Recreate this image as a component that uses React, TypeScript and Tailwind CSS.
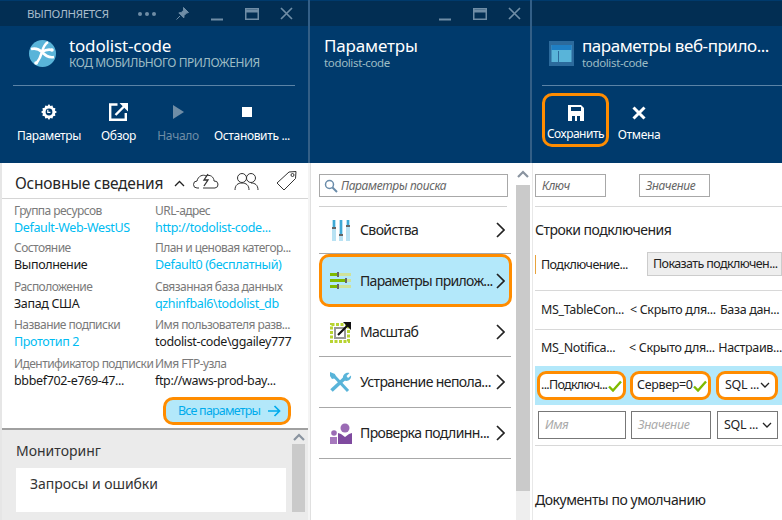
import React from "react";

const Chevron = () => (
  <svg width="9" height="16" viewBox="0 0 9 16" className="shrink-0"><path d="M1 1 L8 8 L1 15" fill="none" stroke="#222" strokeWidth="1.7" /></svg>
);

const WinControls = ({ pr }: { pr: string }) => (
  <div className={`flex items-center gap-[21px] text-[#6f8da6] ${pr}`}>
    <svg width="13" height="14" viewBox="0 0 13 14"><path d="M0 12.5h12" stroke="currentColor" strokeWidth="2" /></svg>
    <svg width="14" height="12" viewBox="0 0 14 12"><rect x="0.75" y="0.75" width="12.5" height="10.5" fill="none" stroke="currentColor" strokeWidth="1.5" /><path d="M0 3h14" stroke="currentColor" strokeWidth="3" /></svg>
    <svg width="13" height="13" viewBox="0 0 13 13"><path d="M1 1l11 11M12 1L1 12" stroke="currentColor" strokeWidth="1.7" /></svg>
  </div>
);

const Cmd = ({ icon, label, w, dim }: { icon: React.ReactNode; label: string; w: string; dim?: boolean }) => (
  <div className={`flex flex-col items-center ${w}`}>
    <div className="h-[24px] flex items-center justify-center">{icon}</div>
    <div className={`mt-[4px] text-[12px] leading-[16px] whitespace-nowrap ${dim ? "text-[#6f8da6]" : "text-white"}`}>{label}</div>
  </div>
);

const Field = ({ label, value, link, h }: { label: string; value: string; link?: boolean; h: string }) => (
  <div className={h}>
    <div className="text-[12px] leading-[16px] tracking-[-0.55px] text-[#7a7a7a] whitespace-nowrap">{label}</div>
    <div className={`text-[12.5px] leading-[17px] whitespace-nowrap ${link ? "text-[#00bcf2]" : "text-[#1a1a1a]"}`}>{value}</div>
  </div>
);

const MenuItem = ({ icon, label, h }: { icon: React.ReactNode; label: string; h: string }) => (
  <div className={`${h} w-[192px] flex items-center pl-[10px] pr-[6px] border-b border-[#a8a8a8]`}>
    <div className="w-[23px] h-[24px] flex items-center justify-center shrink-0">{icon}</div>
    <div className="ml-[8px] flex-1 text-[14px] leading-[20px] tracking-[-0.6px] text-[#222] whitespace-nowrap">{label}</div>
    <Chevron />
  </div>
);

const Check = () => (
  <svg width="14" height="12" viewBox="0 0 14 12" className="shrink-0"><path d="M1 6.5l4 4L13 1.5" fill="none" stroke="#7fba00" strokeWidth="2.4" /></svg>
);
const Down = () => (
  <svg width="10" height="7" viewBox="0 0 10 7" className="shrink-0"><path d="M1 1l4 4 4-4" fill="none" stroke="#222" strokeWidth="1.3" /></svg>
);
const ArrowUp = () => (
  <svg width="12" height="8" viewBox="0 0 12 8"><path d="M1 7l5-5 5 5" fill="none" stroke="#8a94a0" strokeWidth="2.2" /></svg>
);

export default function App() {
  return (
    <div className="w-[782px] h-[520px] overflow-hidden flex bg-[#f4f4f4] text-[#222]" style={{ fontFamily: '"Noto Sans", "Open Sans", sans-serif', letterSpacing: "-0.35px" }}>
      {/* Blade 1 */}
      <div className="w-[308px] shrink-0 flex flex-col">
        <div className="h-[163px] w-[308px] shrink-0 bg-[#003a6c] flex flex-col">
          <div className="h-[25px] mt-[1px] bg-[#022e53] flex items-center justify-between pl-[27px]">
            <div className="text-[11.5px] text-[#a9bccb]">ВЫПОЛНЯЕТСЯ</div>
            <div className="flex items-center">
              <div className="flex gap-[3px] mr-[20px]"><span className="w-[4px] h-[4px] rounded-full bg-[#6f8da6]" /><span className="w-[4px] h-[4px] rounded-full bg-[#6f8da6]" /><span className="w-[4px] h-[4px] rounded-full bg-[#6f8da6]" /></div>
              <svg width="13" height="13" viewBox="0 0 13 13" className="mr-[22px]"><path d="M7.5 0.5l5 5-2 .6-2.4 2.4-.3 2.4-5-5 2.4-.3 2.4-2.4z M4 9l-3.5 3.5" fill="#6f8da6" stroke="#6f8da6" /></svg>
              <WinControls pr="pr-[15px]" />
            </div>
          </div>
          <div className="h-[60px] flex items-center mx-[13px] pl-[16px] border-b border-[#5b83a6]">
            <svg width="27" height="27" viewBox="0 0 27 27" className="shrink-0 -mt-[4px]">
              <circle cx="13.5" cy="13.5" r="13.5" fill="#59b4d9" />
              <path d="M2 9c4-1 8 0 11 3s6 6 12 5M19 2c-3 2-5 6-6 10s-3 8-6 12M13 12c3-2 6-3 10-2" fill="none" stroke="#fff" strokeWidth="2.6" />
              <circle cx="23" cy="10" r="1.8" fill="#fff" />
              <circle cx="7" cy="23" r="1.8" fill="#fff" />
            </svg>
            <div className="ml-[13px] -mt-[5px]">
              <div className="text-[17px] tracking-[-0.15px] leading-[20px] text-white">todolist-code</div>
              <div className="text-[12px] tracking-[-0.45px] leading-[14px] text-[#9dbcc4]">КОД МОБИЛЬНОГО ПРИЛОЖЕНИЯ</div>
            </div>
          </div>
          <div className="flex pl-[11px] pt-[14px]">
            <Cmd w="w-[76px]" label="Параметры" icon={<svg width="16" height="16" viewBox="0 0 16 16"><path d="M8 0l1.3 1.9 2.2-.5.6 2.3 2.3.6-.5 2.2L16 8l-2.1 1.5.5 2.2-2.3.6-.6 2.3-2.2-.5L8 16l-1.5-1.9-2.2.5-.6-2.3-2.3-.6.5-2.2L0 8l1.9-1.5-.5-2.2 2.3-.6.6-2.3 2.2.5z" fill="#fff" /><circle cx="8" cy="8" r="3.4" fill="#003a6c" /><path d="M6.8 5.8v2.6h2.6" fill="none" stroke="#fff" strokeWidth="1.2" /></svg>} />
            <Cmd w="w-[63px]" label="Обзор" icon={<svg width="19" height="18" viewBox="0 0 19 18"><path d="M8.5 1.5H1.2v15.3h15.6V10" fill="none" stroke="#fff" strokeWidth="2.4" /><path d="M6.5 12L15 3.5" stroke="#fff" strokeWidth="2.4" /><path d="M10.5 0H19v8.5z" fill="#fff" /></svg>} />
            <Cmd w="w-[56px]" dim label="Начало" icon={<svg width="11" height="14" viewBox="0 0 11 14"><path d="M0 0l11 7L0 14z" fill="#6f8da6" /></svg>} />
            <Cmd w="w-[92px]" label="Остановить ..." icon={<div className="w-[10px] h-[10px] bg-white mr-[11px]" />} />
          </div>
        </div>
        <div className="flex-1 bg-white flex flex-col border-l-2 border-[#e6e6e6] min-h-0">
          <div className="h-[36px] shrink-0 border-b border-[#d5d5d5] flex items-center pl-[13px] pt-[6px]">
            <div className="text-[15.5px] tracking-[-0.2px] text-[#262626] w-[159px] whitespace-nowrap">Основные сведения</div>
            <svg width="11" height="7" viewBox="0 0 11 7" className="mr-[8px]"><path d="M1 6l4.5-4.5L10 6" fill="none" stroke="#222" strokeWidth="1.3" /></svg>
            <svg width="27" height="20" viewBox="0 0 27 20" className="-mt-[5px]"><path d="M6 17H4a3.5 3.5 0 0 1 0-7c1-5 6-7 9-5 4-2 8 1 8 5a3.5 3.5 0 0 1 1 7H10" fill="none" stroke="#333" strokeWidth="1" /><path d="M15 3l-4 6h4l-4 6" fill="none" stroke="#333" strokeWidth="1.3" /></svg>
            <svg width="25" height="19" viewBox="0 0 25 19" className="ml-[14px] -mt-[5px]"><circle cx="8" cy="6" r="4.5" fill="none" stroke="#333" /><circle cx="17" cy="6" r="4.5" fill="none" stroke="#333" /><path d="M1 18c0-5 3-7 7-7s7 2 7 7M17 11c4 0 7 2 7 7" fill="none" stroke="#333" /></svg>
            <svg width="22" height="22" viewBox="0 0 22 22" className="ml-[17px] -mt-[5px]"><path d="M1 13L13 2l7-.5-.5 7L8 20z" fill="none" stroke="#333" /><circle cx="16.5" cy="5" r="1.5" fill="none" stroke="#333" /></svg>
          </div>
          <div className="flex pl-[12px] pt-[4px] h-[198px] shrink-0">
            <div className="w-[141px] shrink-0">
              <Field h="h-[37px]" label="Группа ресурсов" value="Default-Web-WestUS" link />
              <Field h="h-[39px]" label="Состояние" value="Выполнение" />
              <Field h="h-[38px]" label="Расположение" value="Запад США" />
              <Field h="h-[39px]" label="Название подписки" value="Прототип 2" link />
              <Field h="h-[38px]" label="Идентификатор подписки" value="bbbef702-e769-47..." />
            </div>
            <div className="whitespace-nowrap">
              <Field h="h-[37px]" label="URL-адрес" value="http://todolist-code..." link />
              <Field h="h-[39px]" label="План и ценовая категор..." value="Default0 (бесплатный)" link />
              <Field h="h-[38px]" label="Связанная база данных" value="qzhinfbal6\todolist_db" link />
              <Field h="h-[39px]" label="Имя пользователя разв..." value="todolist-code\ggailey777" />
              <Field h="h-[38px]" label="Имя FTP-узла" value="ftp://waws-prod-bay..." />
            </div>
          </div>
          <div className="h-[31px] shrink-0 flex items-start pl-[161px]">
            <div className="w-[128px] h-[28px] bg-[#b3e8fa] border-[3px] border-[#ff8c00] rounded-[10px] flex items-center justify-between pl-[12px] pr-[7px] text-[12.5px] tracking-[-0.8px] text-[#00abec] whitespace-nowrap">
              <span>Все параметры</span>
              <svg width="13" height="12" viewBox="0 0 13 12"><path d="M0 6h11M6.5 1l5 5-5 5" fill="none" stroke="#00abec" strokeWidth="1.7" /></svg>
            </div>
          </div>
          <div className="flex-1 bg-[#ebebeb] border-t-2 border-[#a0a0a0] flex min-h-0">
            <div className="flex-1 pl-[14px] pt-[11px] min-w-0">
              <div className="text-[14px] leading-[20px] tracking-[0px] text-[#333]">Мониторинг</div>
              <div className="mt-[7px] w-[270px] h-[44px] bg-white pl-[14px] pt-[6px] text-[14px] leading-[20px] tracking-[-0.05px] text-[#333]">Запросы и ошибки</div>
            </div>
            <div className="w-[13px] mr-[3px] flex flex-col shrink-0">
              <div className="h-[14px] flex items-center justify-center"><ArrowUp /></div>
              <div className="h-[68px] bg-[#cacaca]" />
            </div>
          </div>
        </div>
      </div>
      <div className="w-[2px] shrink-0 bg-[#335f87] h-[163px]" />
      {/* Blade 2 */}
      <div className="w-[222px] shrink-0 flex flex-col">
        <div className="h-[163px] shrink-0 bg-[#003a6c] flex flex-col">
          <div className="h-[25px] mt-[1px] bg-[#022e53] flex items-center justify-end"><WinControls pr="pr-[11px]" /></div>
          <div className="pl-[14px] pt-[10px]">
            <div className="text-[17px] leading-[20px] tracking-[-0.15px] text-white">Параметры</div>
            <div className="text-[11.5px] leading-[14px] text-[#9dbcc4]">todolist-code</div>
          </div>
        </div>
        <div className="flex-1 bg-white flex min-h-0 border-l border-[#e0e0e0]">
          <div className="w-[205px] pl-[8px] shrink-0">
            <div className="mt-[11px] w-[189px] h-[23px] border border-[#a8a8a8] flex items-center pl-[4px]">
              <svg width="14" height="14" viewBox="0 0 14 14"><circle cx="5.5" cy="5.5" r="4" fill="none" stroke="#6a8caa" strokeWidth="1.5" /><path d="M8.5 8.5l4.5 4.5" stroke="#6a8caa" strokeWidth="2" /></svg>
              <span className="ml-[3px] text-[12px] italic text-[#666] whitespace-nowrap">Параметры поиска</span>
            </div>
            <div className="mt-[9px] w-[188px] border-t border-[#d0d0d0]" />
            <MenuItem h="h-[47px]" label="Свойства" icon={<svg width="18" height="21" viewBox="0 0 18 21"><rect x="0" y="0" width="4" height="21" fill="#b9e2f3" /><rect x="7" y="0" width="4" height="21" fill="#b9e2f3" /><rect x="14" y="0" width="4" height="21" fill="#b9e2f3" /><rect x="1" y="0" width="2" height="8" fill="#3fa9d5" /><rect x="8" y="0" width="2" height="14" fill="#3fa9d5" /><rect x="15" y="0" width="2" height="6" fill="#3fa9d5" /><rect x="0" y="7" width="4" height="2" fill="#666" /><rect x="7" y="14" width="4" height="2" fill="#666" /><rect x="14" y="5" width="4" height="2" fill="#666" /></svg>} />
            <div className="h-[53px] w-[193px] bg-[#b3e8fa] border-[3px] border-[#ff8c00] rounded-[10px] flex items-center pl-[7px] pr-[4px]">
              <div className="w-[23px] h-[24px] flex items-center justify-center shrink-0"><svg width="21" height="17" viewBox="0 0 21 17"><rect x="0" y="1" width="21" height="3" fill="#cfe29a" /><rect x="0" y="7" width="21" height="3" fill="#cfe29a" /><rect x="0" y="13" width="21" height="3" fill="#cfe29a" /><rect x="0" y="1" width="8" height="3" fill="#7fba00" /><rect x="0" y="7" width="15" height="3" fill="#7fba00" /><rect x="0" y="13" width="7" height="3" fill="#7fba00" /><rect x="7" y="0" width="2" height="5" fill="#666" /><rect x="15" y="6" width="2" height="5" fill="#666" /><rect x="7" y="12" width="2" height="5" fill="#666" /></svg></div>
              <div className="ml-[8px] flex-1 min-w-0 text-[14px] leading-[20px] tracking-[-0.7px] text-[#222] whitespace-nowrap">Параметры прилож...</div>
              <Chevron />
            </div>
            <MenuItem h="h-[50px]" label="Масштаб" icon={<svg width="22" height="22" viewBox="0 0 22 22"><rect x="1.5" y="3.5" width="17" height="17" fill="none" stroke="#b8d432" strokeWidth="3" strokeDasharray="3 1.5" /><rect x="5" y="7" width="10" height="10" fill="none" stroke="#999" strokeWidth="2" /><path d="M8 14L19 3" stroke="#111" strokeWidth="2.2" /><path d="M13 1h8v8z" fill="#111" /></svg>} />
            <MenuItem h="h-[51px]" label="Устранение непола..." icon={<svg width="23" height="21" viewBox="0 0 23 21"><path d="M5 4l14 15" stroke="#59b4d9" strokeWidth="3" /><path d="M1 0l5 2 1 4-4 1-2-3z" fill="#59b4d9" /><path d="M2.5 18.5L15.5 6.5" stroke="#59b4d9" strokeWidth="3.6" /><path d="M14 6.5C13.5 3 16.5 0 20.5 1l-3 3 1.5 2 3-2.5C22.8 7 19 10 15.5 8.5z" fill="#59b4d9" /></svg>} />
            <MenuItem h="h-[51px]" label="Проверка подлинн..." icon={<svg width="22" height="21" viewBox="0 0 22 21"><circle cx="15" cy="5" r="4.5" fill="#9b6bb5" /><circle cx="4" cy="10" r="2.8" fill="#9b6bb5" /><path d="M8 10l3 1 4 3 4-3 3-1v11H8z" fill="#7f4a9f" /><path d="M0 14h7v7H0z" fill="#a678bd" /></svg>} />
          </div>
          <div className="w-[14px] flex flex-col shrink-0 bg-[#eeeeee]">
            <div className="h-[22px] bg-white flex items-center justify-center"><ArrowUp /></div>
            <div className="h-[306px] bg-[#cacaca]" />
          </div>
          <div className="flex-1 bg-white" />
        </div>
      </div>
      {/* Blade 3 */}
      <div className="flex-1 min-w-0 flex flex-col">
        <div className="h-[163px] shrink-0 bg-[#003a6c] flex flex-col border-l-2 border-[#335f87] -ml-[2px]">
          <div className="h-[25px] mt-[1px] bg-[#022e53]" />
          <div className="h-[60px] flex items-center ml-[10px] pl-[7px] border-b border-[#5b83a6]">
            <svg width="25" height="25" viewBox="0 0 25 25" className="shrink-0 -mt-[5px]"><rect width="25" height="25" fill="#2c6a9c" /><rect x="2.5" y="4" width="20" height="17" fill="#59b4d9" /><rect x="2.5" y="4" width="20" height="5" fill="#1f7fc4" /><rect x="9" y="10" width="1" height="11" fill="#2c6a9c" /></svg>
            <div className="ml-[8px] -mt-[5px] whitespace-nowrap">
              <div className="text-[17px] leading-[20px] tracking-[-0.45px] text-white">параметры веб-прило...</div>
              <div className="text-[11.5px] leading-[14px] text-[#9dbcc4]">todolist-code</div>
            </div>
          </div>
          <div className="flex pl-[10px] pt-[7px]">
            <div className="w-[67px] h-[54px] border-[3px] border-[#ff8c00] rounded-[10px] flex flex-col items-center pt-[9px]">
              <svg width="16" height="16" viewBox="0 0 16 16"><path d="M0 0h13l3 3v13H0z" fill="#fff" /><rect x="3" y="2" width="10" height="4" fill="#003a6c" /><rect x="4" y="11" width="3" height="5" fill="#003a6c" /><rect x="9" y="11" width="3" height="5" fill="#003a6c" /></svg>
              <div className="mt-[5px] text-[12px] leading-[16px] tracking-[-0.5px] text-white whitespace-nowrap">Сохранить</div>
            </div>
            <div className="w-[60px] flex flex-col items-center pt-[13px]">
              <svg width="14" height="14" viewBox="0 0 14 14"><path d="M1.5 1.5l11 11M12.5 1.5l-11 11" stroke="#fff" strokeWidth="3" /></svg>
              <div className="mt-[7px] text-[12px] leading-[16px] text-white whitespace-nowrap">Отмена</div>
            </div>
          </div>
        </div>
        <div className="flex-1 bg-white pl-[2px] flex flex-col min-h-0 border-l border-[#e8e8e8]">
          <div className="flex gap-[33px] mt-[11px] h-[23px] text-[12px] italic text-[#666]">
            <div className="w-[71px] border border-[#a8a8a8] pl-[6px] flex items-center">Ключ</div>
            <div className="w-[71px] border border-[#a8a8a8] pl-[6px] flex items-center">Значение</div>
          </div>
          <div className="mt-[9px] border-t border-[#d8d8d8]" />
          <div className="mt-[13px] text-[14px] leading-[20px] tracking-[-0.5px] text-[#222] whitespace-nowrap">Строки подключения</div>
          <div className="mt-[12px] h-[24px] flex items-center">
            <div className="w-[112px] h-[19px] border-l border-[#e8a33d] pl-[5px] text-[12.5px] leading-[19px] tracking-[-0.55px] whitespace-nowrap">Подключение...</div>
            <div className="flex-1 min-w-0 h-[24px] bg-[#eeeeee] border border-[#cccccc] pl-[5px] text-[12.5px] tracking-[-0.6px] leading-[21px] whitespace-nowrap overflow-hidden">Показать подключен...</div>
          </div>
          <div className="mt-[14px] border-t border-[#d8d8d8]" />
          <div className="h-[39px] flex items-center pl-[6px] border-b border-[#d8d8d8] text-[12.5px] text-[#222] whitespace-nowrap">
            <div className="w-[89px]">MS_TableCon...</div>
            <div className="w-[90px]">&lt; Скрыто для...</div>
            <div>База дан...</div>
          </div>
          <div className="h-[36px] flex items-center pl-[6px] text-[12.5px] text-[#222] whitespace-nowrap">
            <div className="w-[89px]">MS_Notifica...</div>
            <div className="w-[90px]">&lt; Скрыто для...</div>
            <div>Настраив...</div>
          </div>
          <div className="h-[39px] bg-[#b3e8fa] flex items-center pl-[2px] gap-[4px] text-[12.5px] text-[#222] whitespace-nowrap">
            <div className="w-[89px] h-[29px] bg-white border-[3px] border-[#ff8c00] rounded-[9px] flex items-center justify-between pl-[1px] pr-[1px]"><span className="tracking-[-0.7px]">...Подключ...</span><Check /></div>
            <div className="w-[81px] h-[29px] bg-white border-[3px] border-[#ff8c00] rounded-[9px] flex items-center justify-between pl-[4px] pr-[2px]"><span>Сервер=0</span><Check /></div>
            <div className="w-[62px] h-[29px] ml-[1px] bg-white border-[3px] border-[#ff8c00] rounded-[9px] flex items-center justify-between pl-[6px] pr-[5px]"><span>SQL ...</span><Down /></div>
          </div>
          <div className="mt-[6px] h-[28px] flex items-stretch pl-[3px] text-[12.5px] whitespace-nowrap">
            <div className="w-[88px] border border-[#777] pl-[6px] flex items-center italic text-[#aaa]">Имя</div>
            <div className="w-[80px] ml-[5px] border border-[#777] pl-[6px] flex items-center italic text-[#aaa]">Значение</div>
            <div className="w-[61px] ml-[6px] border border-[#777] pl-[6px] pr-[5px] flex items-center justify-between text-[#222]"><span>SQL ...</span><Down /></div>
          </div>
          <div className="mt-[6px] border-t border-[#d8d8d8]" />
          <div className="mt-[44px] text-[14px] leading-[20px] tracking-[-0.45px] text-[#222] whitespace-nowrap">Документы по умолчанию</div>
        </div>
      </div>
    </div>
  );
}
